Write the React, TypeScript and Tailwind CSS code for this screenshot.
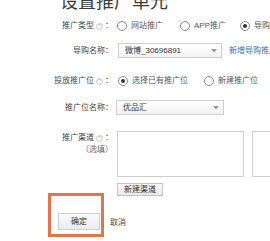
import React from 'react';

const font = "font-['Liberation_Sans','Noto_Sans_CJK_SC',sans-serif]";

function Help() {
  return (
    <span className="mx-[2px] inline-flex h-[7px] w-[7px] shrink-0 items-center justify-center rounded-full border border-[#c8c8c8] text-[5px] leading-none text-[#bbb]">
      ?
    </span>
  );
}

function Radio({ checked, label, className = '' }: { checked?: boolean; label: string; className?: string }) {
  return (
    <span className={`flex shrink-0 items-center whitespace-nowrap ${className}`}>
      <span className="flex h-[10px] w-[10px] shrink-0 items-center justify-center rounded-full border border-[#8a8a8a] bg-white">
        {checked && <span className="h-[4px] w-[4px] rounded-full bg-[#333]" />}
      </span>
      <span className="ml-[4px] text-[#555]">{label}</span>
    </span>
  );
}

function Select({ value, width }: { value: string; width: string }) {
  return (
    <div
      className={`flex h-[15px] ${width} items-center justify-between border border-[#cfcfcf] bg-gradient-to-b from-white to-[#f3f3f3] pl-[6px] pr-[4px] text-[#333]`}
    >
      <span>{value}</span>
      <svg width="6" height="4" viewBox="0 0 6 4">
        <path d="M0 0 L6 0 L3 3.5 Z" fill="#9a9a9a" />
      </svg>
    </div>
  );
}

function Label({ children }: { children: React.ReactNode }) {
  return <div className="flex w-[113px] shrink-0 items-center justify-end text-[#444]">{children}</div>;
}

export default function App() {
  return (
    <div className={`h-[241px] w-[270px] overflow-hidden whitespace-nowrap bg-white text-[8px] leading-[10px] ${font}`}>
      <div className="-mt-[7px] h-[18px] pl-[60px] text-[18px] leading-[18px] text-[#3a3a3a]">设置推广单元</div>

      <div className="mt-[8px] flex h-[14px] items-center">
        <Label>
          推广类型<Help />：
        </Label>
        <div className="ml-[4px] flex shrink-0 items-center">
          <Radio label="网站推广" />
          <Radio label="APP推广" className="ml-[17px]" />
          <Radio checked label="导购推广" className="ml-[14px]" />
        </div>
      </div>

      <div className="mt-[10px] flex items-center">
        <Label>导购名称：</Label>
        <div className="ml-[5px] shrink-0">
          <Select value="微博_30696891" width="w-[104px]" />
        </div>
        <span className="ml-[7px] shrink-0 text-[#3b6fb6]">新增导购推广</span>
      </div>

      <div className="mt-[16px] flex h-[14px] items-center">
        <Label>
          投放推广位<Help />：
        </Label>
        <div className="ml-[5px] flex shrink-0 items-center">
          <Radio checked label="选择已有推广位" />
          <Radio label="新建推广位" className="ml-[16px]" />
        </div>
      </div>

      <div className="mt-[12px] flex items-center">
        <Label>推广位名称：</Label>
        <div className="ml-[3px] shrink-0">
          <Select value="优品汇" width="w-[108px]" />
        </div>
      </div>

      <div className="mt-[16px] flex items-start">
        <div className="flex w-[113px] shrink-0 flex-col items-end pt-[2px] text-[#444]">
          <div className="flex items-center">
            推广渠道<Help />：
          </div>
          <div className="mt-[2px] text-[#666]">（选填）</div>
        </div>
        <div className="ml-[4px] h-[46px] w-[127px] shrink-0 border border-[#cfcfcf] bg-white" />
        <div className="ml-[8px] h-[46px] w-[30px] shrink-0 border border-[#cfcfcf] bg-white" />
      </div>

      <div className="mt-[6px] flex pl-[117px]">
        <button className="h-[13px] w-[46px] border border-[#c4c4c4] bg-gradient-to-b from-[#fbfbfb] to-[#e9e9e9] text-[8px] leading-[10px] text-[#333]">
          新建渠道
        </button>
      </div>

      <div className="-mt-[3px] flex pl-[48px]">
        <div className="flex h-[44px] w-[56px] items-end justify-end border-[3px] border-[#e2764a] pb-[4px] pr-[1px]">
          <button className="h-[17px] w-[42px] border border-[#cfcfcf] bg-gradient-to-b from-[#fafafa] to-[#ececec] text-[8px] leading-[10px] text-[#333]">
            确定
          </button>
        </div>
        <span className="mb-[9px] ml-[6px] self-end text-[#444]">取消</span>
      </div>
    </div>
  );
}
